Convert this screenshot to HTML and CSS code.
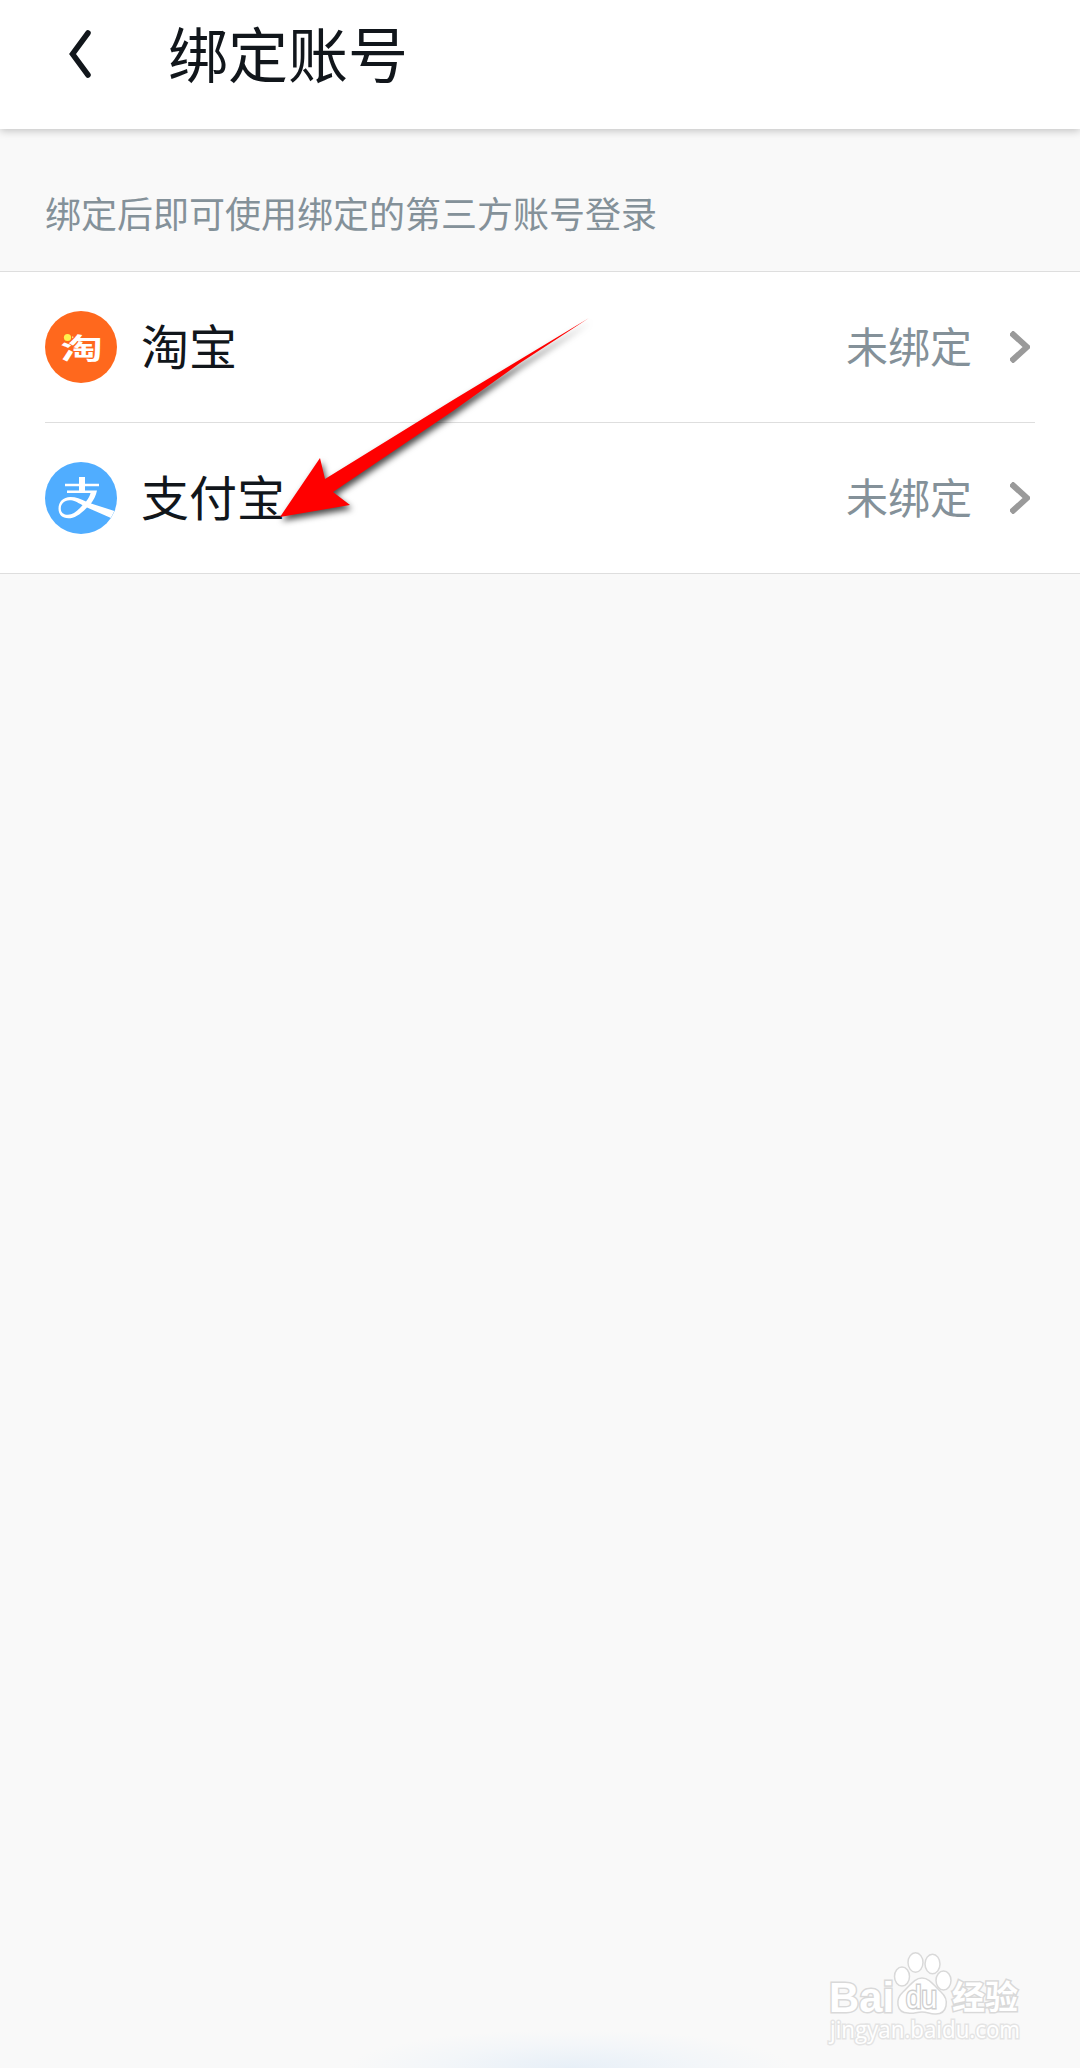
FILE: index.html
```html
<!DOCTYPE html>
<html lang="zh-CN">

<head>
    <meta charset="UTF-8">
    <title>绑定账号</title>
    <link rel="stylesheet" href="styles.css">
</head>

<body>
    <div id="wrapper">
        <div id="header">
            <svg class="back" width="24" height="52" viewBox="0 0 24 52">
                <path d="M20 5 L4.500 26 L20 47" />
            </svg>
            <h1>绑定账号</h1>
        </div>
        <p class="hint">绑定后即可使用绑定的第三方账号登录</p>
        <ul class="accounts">
            <li>
                <svg class="logo" width="72" height="72" viewBox="0 0 72 72">
                    <circle cx="36" cy="36" r="36" fill="#ff681d" />
                    <text class="tao" transform="translate(15.500 48) scale(1.360 .9)">淘</text>
                    <circle cx="22.500" cy="26.500" r="4.800" fill="#ff681d" />
                    <circle cx="22.500" cy="26.500" r="3.600" fill="#fff04d" />
                </svg>
                <span class="name">淘宝</span>
                <span class="status">未绑定</span>
                <svg class="chevron" width="20" height="32" viewBox="0 0 20 32">
                    <path d="M1 1.500 L17 16 L1 30.500" />
                </svg>
            </li>
            <li>
                <svg class="logo" width="72" height="72" viewBox="0 0 72 72">
                    <defs>
                        <clipPath id="disc"><circle cx="36" cy="36" r="36" /></clipPath>
                    </defs>
                    <circle cx="36" cy="36" r="36" fill="#50adff" />
                    <g clip-path="url(#disc)" fill="#fff">
                        <path d="M34 15 H40 V30 H34 Z" />
                        <path d="M20 21.800 H54 V24.200 H20 Z" />
                        <path d="M22 28.500 H52 C51 34 48.500 38 46 41.500 L69.500 49 L66 56 L42 45.500 C35 53 29 56.300 23.500 56.300 C17 56.300 13.500 52.500 13.500 46.500 C13.500 40 18 35 25.500 35 C31 35 35.500 37 41 39.500 C43.500 36.500 45 33.500 45.500 31 H22 Z M37.500 43.200 C32 40.300 29 38.300 24.500 38.300 C19 38.300 15.800 42 15.800 46.500 C15.800 50.500 18.500 52.800 23 52.800 C28 52.800 32.500 49 37.500 43.200 Z" fill-rule="evenodd" />
                    </g>
                </svg>
                <span class="name">支付宝</span>
                <span class="status">未绑定</span>
                <svg class="chevron" width="20" height="32" viewBox="0 0 20 32">
                    <path d="M1 1.500 L17 16 L1 30.500" />
                </svg>
            </li>
        </ul>

        <svg class="arrow" width="340" height="230" viewBox="270 300 340 230">
            <path d="M280 517 L320 458 L325 479 L453 400 L589 318 L520 363 L453 411 L333 492 L350 505 Z" />
        </svg>

        <svg class="watermark" width="210" height="110" viewBox="820 1940 210 110">
            <g class="mark">
                <text x="829" y="2012" class="latin" textLength="65" lengthAdjust="spacingAndGlyphs">Bai</text>
                <ellipse cx="902" cy="1976.500" rx="7.500" ry="9.500" />
                <ellipse cx="915.500" cy="1962.500" rx="7.500" ry="9.700" />
                <ellipse cx="932.500" cy="1964" rx="7.500" ry="9.700" />
                <ellipse cx="943.500" cy="1980.500" rx="7.500" ry="9.500" />
                <path d="M922 1978 C930 1978 934 1986 941 1992 C950 2000 947 2014 936 2014 C930 2014.500 928 2012 922 2012 C916 2012 914 2014 908 2013 C896 2013 895 1999 903 1992 C910 1986 914 1978 922 1978 Z" />
                <text x="906" y="2008" class="du" textLength="31" lengthAdjust="spacingAndGlyphs">du</text>
                <text x="952" y="2009" class="hanzi" textLength="66">经验</text>
            </g>
            <text x="830" y="2038" class="mark url" textLength="190" lengthAdjust="spacingAndGlyphs">jingyan.baidu.com</text>
        </svg>
        <div class="glow"></div>
    </div>
</body>

</html>
```
FILE: styles.css
```css
body {
    margin: 0;
    background-color: #f9f9f9;
    font-family: "Noto Sans CJK SC", sans-serif;
}

#wrapper {
    position: relative;
    height: 2068px;
    overflow: hidden;
}

#header {
    display: flex;
    align-items: flex-start;
    height: 129px;
    padding: 28px 0 0 68px;
    box-sizing: border-box;
    background-color: #fff;
    box-shadow: 0 2px 8px rgba(0, 0, 0, 0.22);
}

#header h1 {
    margin: -16px 0 0 76px;
    font-size: 60px;
    font-weight: 400;
    line-height: 80px;
    color: #11161b;
}

.back path {
    fill: none;
    stroke: #11161b;
    stroke-width: 5.5;
    stroke-linecap: round;
}

.hint {
    margin: 0;
    padding: 56px 45px 32px;
    font-size: 36px;
    line-height: 54px;
    color: #849199;
}

.accounts {
    margin: 0;
    padding: 0;
    list-style: none;
    background-color: #fff;
    border-top: 1px solid #dedede;
    border-bottom: 1px solid #dedede;
}

.accounts li {
    display: flex;
    align-items: center;
    height: 150px;
    margin: 0 45px;
    padding-right: 5px;
}

.accounts li + li {
    border-top: 1px solid #dedede;
}

.name {
    flex: 1;
    margin-left: 24px;
    padding-bottom: 7px;
    font-size: 48px;
    line-height: 72px;
    color: #11161b;
}

.status {
    margin-right: 38px;
    padding-bottom: 4px;
    font-size: 42px;
    line-height: 64px;
    color: #849199;
}

.chevron path {
    fill: none;
    stroke: #9a9a9a;
    stroke-width: 6;
}

.tao {
    font-size: 31px;
    font-weight: 700;
    fill: #fff;
}

.arrow {
    position: absolute;
    left: 270px;
    top: 300px;
    fill: #f00;
    filter: drop-shadow(2px 4px 3px rgba(0, 0, 0, 0.7));
}

.watermark {
    position: absolute;
    left: 820px;
    top: 1940px;
}

.mark {
    fill: #fff;
    stroke: #d9d9d9;
    stroke-width: 1.5;
}

.mark text, .url {
    paint-order: stroke;
    stroke-width: 3;
}

.latin {
    font: bold 42px "Liberation Sans", sans-serif;
}

.du {
    font: 31px "Liberation Sans", sans-serif;
    stroke: #cfcfcf;
}

.hanzi {
    font-size: 33px;
    font-weight: 700;
}

.url {
    font: 23px "Open Sans", sans-serif;
    stroke: #e4e4e4;
}

/* soft light rising from the bottom edge */
.glow {
    position: absolute;
    left: 340px;
    bottom: 0;
    width: 460px;
    height: 40px;
    background: radial-gradient(ellipse at 50% 100%, #e7eff7 0, #f3f6f9 40%, #f9f9f9 68%);
}
```
